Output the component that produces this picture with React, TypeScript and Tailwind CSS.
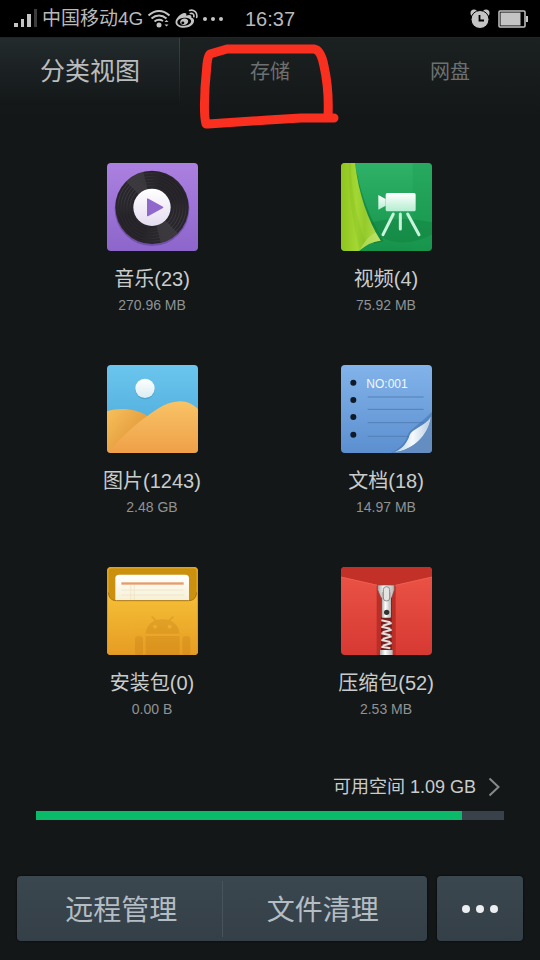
import type { ReactNode } from "react";

const categories = [
  { name: "音乐", count: 23, size: "270.96 MB", icon: <MusicIcon /> },
  { name: "视频", count: 4, size: "75.92 MB", icon: <VideoIcon /> },
  { name: "图片", count: 1243, size: "2.48 GB", icon: <PictureIcon /> },
  { name: "文档", count: 18, size: "14.97 MB", icon: <DocumentIcon /> },
  { name: "安装包", count: 0, size: "0.00 B", icon: <PackageIcon /> },
  { name: "压缩包", count: 52, size: "2.53 MB", icon: <ArchiveIcon /> },
];

const usedPercent = 91;

export default function App() {
  return (
    <div className="min-h-screen flex flex-col bg-[#131718] font-['Liberation_Sans','Noto_Sans_CJK_SC',sans-serif] text-[#c9cccd]">
      <StatusBar />
      <Tabs />

      <main className="grow">
        <div className="grid grid-cols-2 gap-y-12 pl-[35px] pr-[37px] pt-[46px]">
          {categories.map((c) => (
            <Category key={c.name} {...c} />
          ))}
        </div>

        <div className="px-9 pt-[52px]">
          <a href="#storage" className="flex items-center justify-end gap-3 pr-1 h-7">
            <span className="text-[18px] leading-7">可用空间 1.09 GB</span>
            <svg className="w-3 h-5" viewBox="0 0 12 20" fill="none" stroke="#858a8c" strokeWidth="2">
              <path d="M1.5 1.5 10.5 10 1.5 18.5" />
            </svg>
          </a>
          <div className="mt-[10px] h-[9px] bg-[#39414a]">
            <div className="h-full bg-[#0bba68]" style={{ width: `${usedPercent}%` }} />
          </div>
        </div>
      </main>

      <footer className="flex gap-[10px] px-[17px] pb-[19px] text-[#b4bdc3]">
        <div className="grow flex items-center h-[65px] px-1 rounded-[4px] bg-linear-to-b from-[#3b474f] to-[#343f48] shadow-[0_0_2px_#000]">
          <button className="flex-1 h-14 pt-1 border-r border-[#48545c] text-[28px]">远程管理</button>
          <button className="flex-1 h-14 pt-1 text-[28px]">文件清理</button>
        </div>
        <button
          aria-label="更多"
          className="w-[86px] h-[65px] flex items-center justify-center gap-[6px] rounded-[4px] bg-linear-to-b from-[#3b474f] to-[#343f48] shadow-[0_0_2px_#000]"
        >
          <span className="size-2 rounded-full bg-[#eceff1]" />
          <span className="size-2 rounded-full bg-[#eceff1]" />
          <span className="size-2 rounded-full bg-[#eceff1]" />
        </button>
      </footer>
    </div>
  );
}

function StatusBar() {
  return (
    <header className="relative h-[37px] flex items-center bg-black pl-[14px] pr-3 text-[#b9b9b9]">
      <svg className="w-6 h-5" viewBox="0 0 24 20" fill="#c4c4c4">
        <rect x="0" y="14" width="4" height="4" />
        <rect x="7" y="10" width="3" height="8" />
        <rect x="13" y="5" width="4" height="13" />
        <rect x="20" y="0" width="3" height="18" fill="#3c3c3c" />
      </svg>
      <span className="ml-1 text-[19px] leading-6">中国移动4G</span>
      <svg className="ml-1 w-6 h-5" viewBox="0 0 24 20" fill="none" stroke="#c4c4c4" strokeWidth="2">
        <path d="M1.5 6.5C8 .5 16 .5 22.500 6.500M4.500 9.500c4.500-4 10.500-4 15 0M7.500 12.500c2.800-2.200 5.500-2.300 8.500-.5" />
        <circle cx="12" cy="16" r="2.500" fill="#c4c4c4" stroke="none" />
        <path d="m17.500 13 2-2 2 2zM17.500 15.500l2 2 2-2z" fill="#c4c4c4" stroke="none" />
      </svg>
      <svg className="ml-1 w-6 h-5" viewBox="0 0 24 20">
        <path
          fill="#c4c4c4"
          fillRule="evenodd"
          d="M9.500 4c2 0 2.200 1.300 1.700 2.800 3-1.200 5.800-1 5.200 2 2 .6 3 1.800 2.600 3.700-.6 3.500-5 6.200-10 6.200-4.700 0-8.500-2-8.500-5.500C.5 9.500 5.800 4 9.500 4Zm-.6 4.800c-3.900.3-6.700 2.400-6.500 4.600.2 2.300 3.300 3.700 7.200 3.400 3.800-.3 6.700-2.400 6.500-4.700-.2-2.300-3.300-3.600-7.200-3.300Z"
        />
        <path
          fill="#c4c4c4"
          fillRule="evenodd"
          d="M9.500 9.600c2.500 0 4 1.400 3.700 3.200-.3 1.900-2.200 3.300-4.500 3.300s-3.800-1.400-3.500-3.300c.3-1.800 2-3.200 4.300-3.200Zm-1.700 3a1.500 1.300 0 1 0 .1 2.600 1.500 1.300 0 0 0-.1-2.600Z"
        />
        <path
          d="M14.500 1.400c4.500-1.200 8.300 2.300 7.200 7M15.300 4.500c2.300-.7 4 1 3.500 3.200"
          fill="none"
          stroke="#c4c4c4"
          strokeWidth="1.600"
          strokeLinecap="round"
        />
      </svg>
      <svg className="ml-1 w-5 h-1" viewBox="0 0 20 4" fill="#c4c4c4">
        <circle cx="2" cy="2" r="2" />
        <circle cx="10" cy="2" r="2" />
        <circle cx="18" cy="2" r="2" />
      </svg>
      <time className="absolute inset-x-0 text-center text-[20px] leading-6">16:37</time>
      <svg className="ml-auto w-5 h-5" viewBox="0 0 20 20" fill="#c4c4c4">
        <circle cx="4" cy="4" r="3.500" />
        <circle cx="16" cy="4" r="3.500" />
        <circle cx="10" cy="10.500" r="9" stroke="#000" />
        <path d="M9.500 6v5.500H14" fill="none" stroke="#000" strokeWidth="1.800" />
      </svg>
      <svg className="ml-2 w-[30px] h-[18px]" viewBox="0 0 30 18">
        <rect x="1" y="1" width="26" height="16" rx="1" fill="none" stroke="#c4c4c4" strokeWidth="1.500" />
        <rect x="2.500" y="2.500" width="20" height="13" fill="#c4c4c4" />
        <rect x="28" y="6" width="2" height="6" fill="#c4c4c4" />
      </svg>
    </header>
  );
}

function Tabs() {
  return (
    <nav className="grid grid-cols-3 h-20 pb-3 bg-linear-to-b from-[#1b2021] to-[#131718] border-t border-[#202425] text-[20px] text-[#6d7070]">
      <button className="relative bg-linear-to-b from-[#232b2d] to-[#131718] text-[25px] text-[#b9bdbd]">
        分类视图
        <span className="absolute right-0 inset-y-0 w-px bg-linear-to-b from-[#3a4244] to-transparent" />
      </button>
      <button className="relative">
        存储
        <svg className="absolute left-4 top-1 w-[144px] h-[90px]" viewBox="0 0 144 90" fill="none">
          <path
            d="M10 82C7 70 9 58 9 46L11 22Q12 13 14 12L31 7H118Q125 8 128 24C132 42 133 54 132 74M12 82 72 78 105 76H138"
            stroke="#f9301f"
            strokeWidth="9"
            strokeLinecap="round"
            strokeLinejoin="round"
          />
        </svg>
      </button>
      <button>网盘</button>
    </nav>
  );
}

function Category({
  name,
  count,
  size,
  icon,
}: {
  name: string;
  count: number;
  size: string;
  icon: ReactNode;
}) {
  return (
    <a href="#category" className="flex flex-col items-center">
      {icon}
      <span className="mt-[14px] text-[20px] leading-7">
        {name}({count})
      </span>
      <span className="text-[14px] leading-6 text-[#8f9394]">{size}</span>
    </a>
  );
}

function Tile({ id, children }: { id: string; children: ReactNode }) {
  return (
    <svg className="w-[91px] h-[88px]" viewBox="0 0 273 264">
      <clipPath id={id}>
        <rect width="273" height="264" rx="12" />
      </clipPath>
      <g clipPath={`url(#${id})`}>{children}</g>
    </svg>
  );
}

function Gradient({ id, from, to }: { id: string; from: string; to: string }) {
  return (
    <linearGradient id={id} x1="0" y1="0" x2="0" y2="1">
      <stop stopColor={from} />
      <stop offset="1" stopColor={to} />
    </linearGradient>
  );
}

function MusicIcon() {
  return (
    <Tile id="music">
      <Gradient id="music-bg" from="#ab80e0" to="#8d66cb" />
      <Gradient id="music-label" from="#ffffff" to="#e4dcf1" />
      <linearGradient id="music-shine" x1="0" y1="0" x2="1" y2="1">
        <stop stopColor="#555257" />
        <stop offset=".35" stopColor="#211f23" />
        <stop offset=".65" stopColor="#211f23" />
        <stop offset="1" stopColor="#555257" />
      </linearGradient>
      <rect width="273" height="264" fill="url(#music-bg)" />
      <circle cx="135" cy="137" r="112" fill="#5d3f91" opacity=".6" />
      <circle cx="135" cy="133" r="110" fill="#28262b" />
      <path
        d="M135 133 57 56A110 110 0 0 1 109 26ZM135 133 213 210A110 110 0 0 1 161 240Z"
        fill="#4c494e"
        opacity=".5"
      />
      <g fill="none" stroke="url(#music-shine)" strokeWidth="3">
        <circle cx="135" cy="133" r="102" />
        <circle cx="135" cy="133" r="93" />
        <circle cx="135" cy="133" r="84" />
        <circle cx="135" cy="133" r="75" />
        <circle cx="135" cy="133" r="66" />
      </g>
      <circle cx="135" cy="133" r="56" fill="url(#music-label)" />
      <path d="M122 108v50l45-25Z" fill="#9068cb" stroke="#9068cb" strokeWidth="4" strokeLinejoin="round" />
    </Tile>
  );
}

function VideoIcon() {
  return (
    <Tile id="video">
      <Gradient id="video-bg" from="#2eb268" to="#17924b" />
      <Gradient id="video-cam" from="#ffffff" to="#b2eed0" />
      <linearGradient id="video-curtain">
        <stop stopColor="#8fc51f" />
        <stop offset=".4" stopColor="#a3d733" />
        <stop offset=".6" stopColor="#94cb2b" />
        <stop offset="1" stopColor="#b7df52" />
      </linearGradient>
      <rect width="273" height="264" fill="url(#video-bg)" />
      <rect x="215" width="58" height="264" fill="#1a9a50" opacity=".35" />
      <path d="M90 178Q180 158 273 178V215Q180 258 122 222Z" fill="#0e7d3b" opacity=".4" />
      <path d="M42 0C57 90 86 166 128 234L100 242 44 100Z" fill="#0c7536" opacity=".5" />
      <path d="M0 0H42C53 92 80 171 119 233 92 236 73 247 57 262L54 264H0Z" fill="url(#video-curtain)" />
      <path d="M23 0C22 90 35 180 57 262 62 249 67 240 73 233 45 165 30 80 30 0Z" fill="#75b117" opacity=".2" />
      <path d="M57 262C73 247 92 236 119 233L104 208C86 216 70 236 57 262Z" fill="#c8e879" opacity=".5" />
      <g fill="url(#video-cam)">
        <rect x="134" y="90" width="90" height="55" rx="5" />
        <path d="M112 96 134 108v20l-22 12Z" />
      </g>
      <path d="m157 153-31 62M178 153v45M200 153l34 62" stroke="#c8f4dc" strokeWidth="9" strokeLinecap="round" />
    </Tile>
  );
}

function PictureIcon() {
  return (
    <Tile id="picture">
      <Gradient id="picture-sky" from="#6bc6ee" to="#3e9bce" />
      <Gradient id="picture-front" from="#f9c366" to="#efa048" />
      <linearGradient id="picture-back" x1="0" y1="0" x2="1" y2="1">
        <stop stopColor="#f8c05b" />
        <stop offset="1" stopColor="#da8a30" />
      </linearGradient>
      <Gradient id="picture-sun" from="#ffffff" to="#d9ecf2" />
      <rect width="273" height="330" fill="url(#picture-sky)" />
      <circle cx="114" cy="74" r="29" fill="#2b86b5" opacity=".4" />
      <circle cx="114" cy="70" r="29" fill="url(#picture-sun)" />
      <path d="M0 139C40 127 86 131 121 153L110 220 0 264Z" fill="url(#picture-back)" />
      <path
        d="M0 264C40 220 88 175 121 153 154 128 184 110 219 109 242 109 260 119 273 133V264Z"
        fill="url(#picture-front)"
      />
    </Tile>
  );
}

function DocumentIcon() {
  return (
    <Tile id="document">
      <Gradient id="document-bg" from="#82b3ea" to="#5c8fcf" />
      <linearGradient id="document-curl">
        <stop stopColor="#b9cde2" />
        <stop offset=".5" stopColor="#f5f9fc" />
        <stop offset="1" stopColor="#b9cde2" />
      </linearGradient>
      <rect width="273" height="264" fill="url(#document-bg)" />
      <g fill="#101a28">
        <circle cx="37" cy="53" r="9" />
        <circle cx="37" cy="105" r="9" />
        <circle cx="37" cy="156" r="9" />
        <circle cx="37" cy="209" r="9" />
      </g>
      <text x="76" y="68" fontSize="36" fontFamily="Liberation Sans, sans-serif" fill="#f3f8fd">
        NO:001
      </text>
      <path d="M80 96H248M80 133H248M80 173H248M80 214H205" stroke="#5580b8" strokeWidth="3" />
      <path d="M273 140C240 175 206 192 200 210 195 232 175 252 150 264H273Z" fill="#386aa9" opacity=".45" />
      <path
        d="M270 155C252 184 214 190 206 210 199 234 183 252 160 262 214 255 262 213 270 155Z"
        fill="url(#document-curl)"
      />
      <path d="M270 155C262 213 214 255 160 262L155 264H273V155Z" fill="#6a91c2" opacity=".8" />
    </Tile>
  );
}

function PackageIcon() {
  return (
    <Tile id="package">
      <Gradient id="package-bg" from="#f7c339" to="#e69c23" />
      <Gradient id="package-paper" from="#ffffff" to="#f5eed0" />
      <rect width="273" height="264" fill="#f2b52f" />
      <rect x="4" y="4" width="265" height="130" rx="10" fill="#cb900d" />
      <path d="M25 110V34Q25 23 36 23H235Q246 23 246 34V110Z" fill="url(#package-paper)" />
      <rect x="43" y="46" width="187" height="7" fill="#e89b6a" />
      <path d="M43 69H230M43 84H230M71 54V103M82 54V103" stroke="#eedfbd" strokeWidth="2" />
      <path d="M0 60 4 76Q6 101 28 101H245Q267 101 269 76L273 60V264H0Z" fill="url(#package-bg)" />
      <path d="M4 76Q6 101 28 101H245Q267 101 269 76" fill="none" stroke="#aa7510" strokeWidth="3" />
      <rect x="1" y="1" width="271" height="262" rx="12" fill="none" stroke="#d99a25" strokeWidth="3" />
      <g fill="#b97612" opacity=".26">
        <path
          fillRule="evenodd"
          d="M116 200C118 179 128 167 143 161L132 150 136 147 149 159Q166 154 184 159L197 147 201 150 190 161C206 168 216 180 218 200ZM144 173a6 6 0 1 0 .1 0ZM188 173a6 6 0 1 0 .1 0Z"
        />
        <path d="M116 207H218V264H116ZM84 216Q84 207 96 207T108 216V257Q108 264 96 264T84 257ZM226 216Q226 207 238 207T250 216V257Q250 264 238 264T226 257Z" />
      </g>
    </Tile>
  );
}

function ArchiveIcon() {
  return (
    <Tile id="archive">
      <Gradient id="archive-bg" from="#ed5548" to="#d63932" />
      <linearGradient id="archive-metal">
        <stop stopColor="#a9a6a5" />
        <stop offset=".4" stopColor="#ffffff" />
        <stop offset="1" stopColor="#b6b2b0" />
      </linearGradient>
      <rect width="273" height="264" fill="url(#archive-bg)" />
      <path d="M0 0H273V29L163 54H110L0 29Z" fill="#c23028" />
      <path d="M0 30 110 55M273 30 163 55" stroke="#f4665a" strokeWidth="2" />
      <rect x="107" y="56" width="57" height="208" fill="#ba2e28" />
      <rect x="120" y="60" width="32" height="204" fill="#71201d" />
      <path
        d="m121 160 27 6M152 168l-27 8M121 179l27 6M152 188l-27 8M121 199l27 6M152 208l-27 8M121 219l27 6M152 228l-27 8M121 239l27 5"
        stroke="#e3dddb"
        strokeWidth="6"
      />
      <rect x="117" y="249" width="38" height="15" fill="url(#archive-metal)" />
      <path d="M110 54H160V69L152 92H120L110 69Z" fill="url(#archive-metal)" stroke="#8b4542" strokeWidth="2" />
      <rect x="122" y="75" width="28" height="77" rx="3" fill="url(#archive-metal)" />
      <rect x="127" y="59" width="19" height="43" rx="9" fill="#e4e3e2" stroke="#8b8988" strokeWidth="3" />
      <circle cx="137" cy="136" r="8" fill="#343233" />
    </Tile>
  );
}
